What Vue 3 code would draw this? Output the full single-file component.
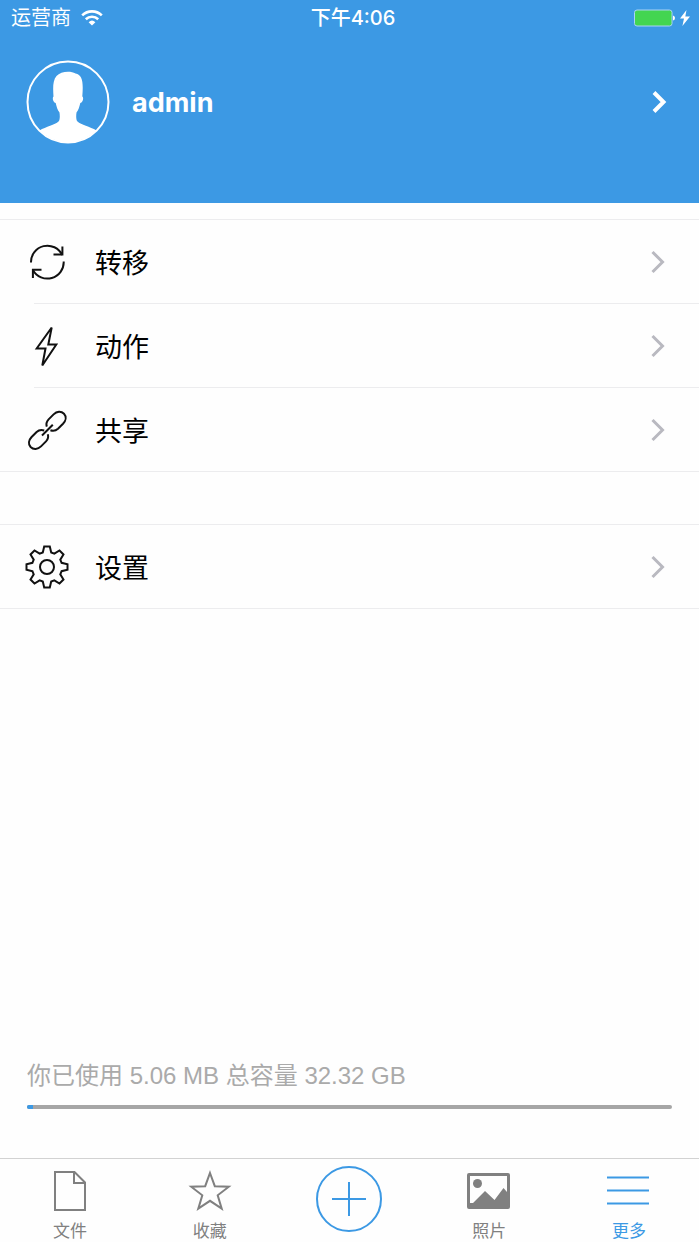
<script setup>
import { ref } from 'vue'

const groups = [
  [
    { id: 'transfer', label: '转移' },
    { id: 'actions', label: '动作' },
    { id: 'shares', label: '共享' },
  ],
  [{ id: 'settings', label: '设置' }],
]

const tabs = [
  { id: 'files', label: '文件' },
  { id: 'favorites', label: '收藏' },
  { id: 'add', label: '' },
  { id: 'photos', label: '照片' },
  { id: 'more', label: '更多' },
]

const active = ref('more')

// Outline of an eight-toothed gear centred on 24,24
function gearPath() {
  const tooth = [[-14.6, -4.2], [-20.5, -2.8], [-20.5, 2.8], [-14.6, 4.2]]
  const points = []
  for (let i = 0; i < 8; i++) {
    const a = (i * Math.PI) / 4
    for (const [x, y] of tooth) {
      const px = 24 + x * Math.cos(a) + y * Math.sin(a)
      const py = 24 + x * Math.sin(a) - y * Math.cos(a)
      points.push([px.toFixed(2), py.toFixed(2)])
    }
  }
  return 'M' + points.map((p) => p.join(' ')).join('L') + 'Z'
}
const gear = gearPath()
</script>

<template>
  <div class="screen">
    <header class="top">
      <div class="status">
        <div class="carrier">
          <span>运营商</span>
          <svg width="22" height="16" viewBox="0 0 22 16" aria-hidden="true">
            <path d="M1.2 5.4A14 14 0 0 1 20.8 5.4" fill="none" stroke="#fff" stroke-width="2.6" />
            <path d="M4.8 9.2A9 9 0 0 1 17.2 9.2" fill="none" stroke="#fff" stroke-width="2.6" />
            <path d="M7.6 12.2A5 5 0 0 1 14.4 12.2L11 15.6Z" fill="#fff" />
          </svg>
        </div>
        <time class="clock">下午4:06</time>
        <div class="power">
          <svg width="58" height="18" viewBox="0 0 58 18" aria-hidden="true">
            <rect x="1.500" y="1" width="37.500" height="16" rx="2.500" fill="#43d551" stroke="#a9d3f5" />
            <path d="M40 6.500Q42 7 42 9T40 11.500Z" fill="#fff" />
            <path d="M53.500 1L47 9.600H51L49.400 17L57 7.600H52.300Z" fill="#fff" />
          </svg>
        </div>
      </div>
      <button class="profile" type="button">
        <svg width="84" height="84" viewBox="0 0 84 84" aria-hidden="true">
          <path d="M13.500 70.500C20 66.500 29 65 32.500 61.500C34 60 34 56 33.500 52.500C31.500 50 30.500 46.500 29.700 43C27 42.500 26 37.500 27.500 36.500C27 29 26.500 20.500 30.500 16C34.500 11.300 44.500 10.500 49.500 13.500C56.500 15 57.500 22 56.300 36.500C58 37.500 57 42.500 54.300 43C53.500 46.500 52.500 50 50.500 52.500C50 56 50 60 51.500 61.500C55 65 64 66.500 70.500 70.500A40.500 40.500 0 0 1 13.500 70.500Z" fill="#fff" />
          <circle cx="42" cy="42" r="40.500" fill="none" stroke="#fff" stroke-width="2" />
        </svg>
        <span class="name">admin</span>
        <svg class="chevron bold" width="16" height="24" viewBox="0 0 16 24" aria-hidden="true">
          <path d="M3 2.500L12.500 12L3 21.500" />
        </svg>
      </button>
    </header>

    <main class="content">
      <ul v-for="(group, g) in groups" :key="g" class="group">
        <li v-for="item in group" :key="item.id" class="item">
          <button class="row" type="button">
            <svg class="icon" width="48" height="48" viewBox="0 0 48 48" aria-hidden="true">
              <g v-if="item.id === 'transfer'">
                <path d="M8 24.500A16.400 16.400 0 0 1 39.200 17M40.700 23.500A16.400 16.400 0 0 1 10 32.200" />
                <path d="M39.400 8.500V16.600H30.500M9.900 40V31.700H18.500" />
              </g>
              <path v-else-if="item.id === 'actions'" d="M28.700 5.500L13.700 26.500H22.500L19.300 43.500L33.300 22.500H25.300Z" />
              <g v-else-if="item.id === 'shares'">
                <path d="M23.800 20.600C22.800 17.600 23.600 15.600 25.600 13.400L30.600 8.400C33.800 5.200 38.200 5 41 7.800C43.600 10.600 43 14.600 40 17.800L35 22.800C32.800 24.800 30.200 25.200 27.400 24.300" />
                <path d="M24.800 28.200C25.800 31.200 25 33.200 23 35.400L18 40.400C14.800 43.600 10.400 43.800 7.600 41C5 38.200 5.600 34.200 8.600 31L13.600 26C15.800 24 18.400 23.600 21.200 24.500" />
                <path d="M19 29.500L29.800 18.800" />
              </g>
              <g v-else>
                <path :d="gear" />
                <circle cx="24" cy="24" r="7" />
              </g>
            </svg>
            <span class="label">{{ item.label }}</span>
            <svg class="chevron" width="16" height="24" viewBox="0 0 16 24" aria-hidden="true">
              <path d="M2.500 2L12.500 12L2.500 22" />
            </svg>
          </button>
        </li>
      </ul>

      <section class="storage">
        <label for="quota">你已使用 5.06 MB 总容量 32.32 GB</label>
        <progress id="quota" max="100" value="1"></progress>
      </section>
    </main>

    <nav class="tabs">
      <button
        v-for="tab in tabs"
        :key="tab.id"
        type="button"
        class="tab"
        :class="{ active: tab.id === active, add: tab.id === 'add' }"
        :aria-label="tab.label || '添加'"
        @click="active = tab.id"
      >
        <svg v-if="tab.id === 'add'" width="66" height="66" viewBox="0 0 66 66" aria-hidden="true">
          <circle cx="33" cy="33" r="32" />
          <path d="M16 33H50M33 16V50" />
        </svg>
        <svg v-else width="44" height="44" viewBox="0 0 44 44" aria-hidden="true">
          <path v-if="tab.id === 'files'" d="M7 3H26.500L37 13.500V41H7ZM26 3V14H37" />
          <path v-else-if="tab.id === 'favorites'" d="M22 4L26.800 17.200L40.800 17.700L29.700 26.300L33.700 39.700L22 31.800L10.300 39.700L14.300 26.300L3.200 17.700L17.200 17.200Z" />
          <g v-else-if="tab.id === 'photos'" class="solid">
            <path fill-rule="evenodd" d="M2 4H41Q43 4 43 6V38Q43 40 41 40H2Q0 40 0 38V6Q0 4 2 4ZM3 7V34H6L18 22L27.500 31L36.500 19L40 23V7Z" />
            <circle cx="10.500" cy="14.500" r="4.500" />
          </g>
          <path v-else d="M0 8.500H42M0 21.500H42M0 34.500H42" />
        </svg>
        <span v-if="tab.label">{{ tab.label }}</span>
      </button>
    </nav>
  </div>
</template>

<style>
body {
  margin: 0;
  background: #fff;
}
</style>

<style scoped>
.screen {
  min-height: 100vh;
  display: flex;
  flex-direction: column;
  background: #fefefe;
  color: #000;
  font-family: Inter, "Noto Sans CJK SC", sans-serif;
}
button {
  border: 0;
  padding: 0;
  background: none;
  color: inherit;
  font: inherit;
  cursor: pointer;
}
svg {
  display: block;
  flex: none;
}
.top {
  background: #3c99e4;
  color: #fff;
  padding-bottom: 59px;
}
.status {
  display: grid;
  grid-template-columns: 1fr auto 1fr;
  align-items: center;
  height: 36px;
  padding: 0 8px 0 11px;
  font-size: 20px;
  line-height: 36px;
}
.carrier {
  display: flex;
  align-items: center;
  gap: 10px;
}
.clock {
  padding-left: 4px;
  font-weight: 500;
}
.power {
  justify-self: end;
}
.profile {
  display: flex;
  align-items: center;
  width: 100%;
  margin-top: 24px;
  padding: 0 32px 0 26px;
  text-align: left;
}
.name {
  flex: 1;
  margin-left: 22px;
  font-size: 27px;
  font-weight: 700;
}
.chevron {
  fill: none;
  stroke: #b9b9c0;
  stroke-width: 3;
}
.chevron.bold {
  stroke: #fff;
  stroke-width: 4;
}
.content {
  flex: 1;
  display: flex;
  flex-direction: column;
  padding-top: 16px;
}
.group {
  list-style: none;
  margin: 0 0 52px;
  padding: 0;
  border: solid #ececee;
  border-width: 1px 0;
}
.item + .item::before {
  content: "";
  display: block;
  height: 1px;
  margin-left: 34px;
  background: #ececee;
}
.row {
  display: flex;
  align-items: center;
  width: 100%;
  height: 83px;
  padding: 0 33px 0 23px;
  text-align: left;
}
.icon {
  fill: none;
  stroke: #111;
  stroke-width: 2;
}
.label {
  flex: 1;
  margin-left: 24px;
  font-size: 27px;
}
.storage {
  margin-top: auto;
  padding: 0 27px 49px;
  color: #aaa;
}
.storage label {
  display: block;
  font-family: "Liberation Sans", "Noto Sans CJK SC", sans-serif;
  font-size: 24px;
  line-height: 36px;
}
progress {
  appearance: none;
  display: block;
  width: 100%;
  height: 4px;
  margin-top: 11px;
  border: 0;
  border-radius: 2px;
  overflow: hidden;
  background: #a6a6a6;
}
progress::-webkit-progress-bar {
  background: #a6a6a6;
}
progress::-webkit-progress-value {
  background: #3c99e4;
}
.tabs {
  display: grid;
  grid-template-columns: repeat(5, 1fr);
  height: 83px;
  border-top: 1px solid #d2d2d2;
}
.tab {
  display: flex;
  flex-direction: column;
  align-items: center;
  padding-top: 10px;
  color: #808080;
  font-size: 17px;
  line-height: 24px;
}
.tab svg {
  fill: none;
  stroke: currentColor;
  stroke-width: 2;
}
.tab span {
  margin-top: 6px;
}
.tab .solid {
  fill: currentColor;
  stroke: none;
}
.tab.active,
.tab.add {
  color: #3c99e4;
}
.tab.add {
  padding-top: 7px;
}
</style>
